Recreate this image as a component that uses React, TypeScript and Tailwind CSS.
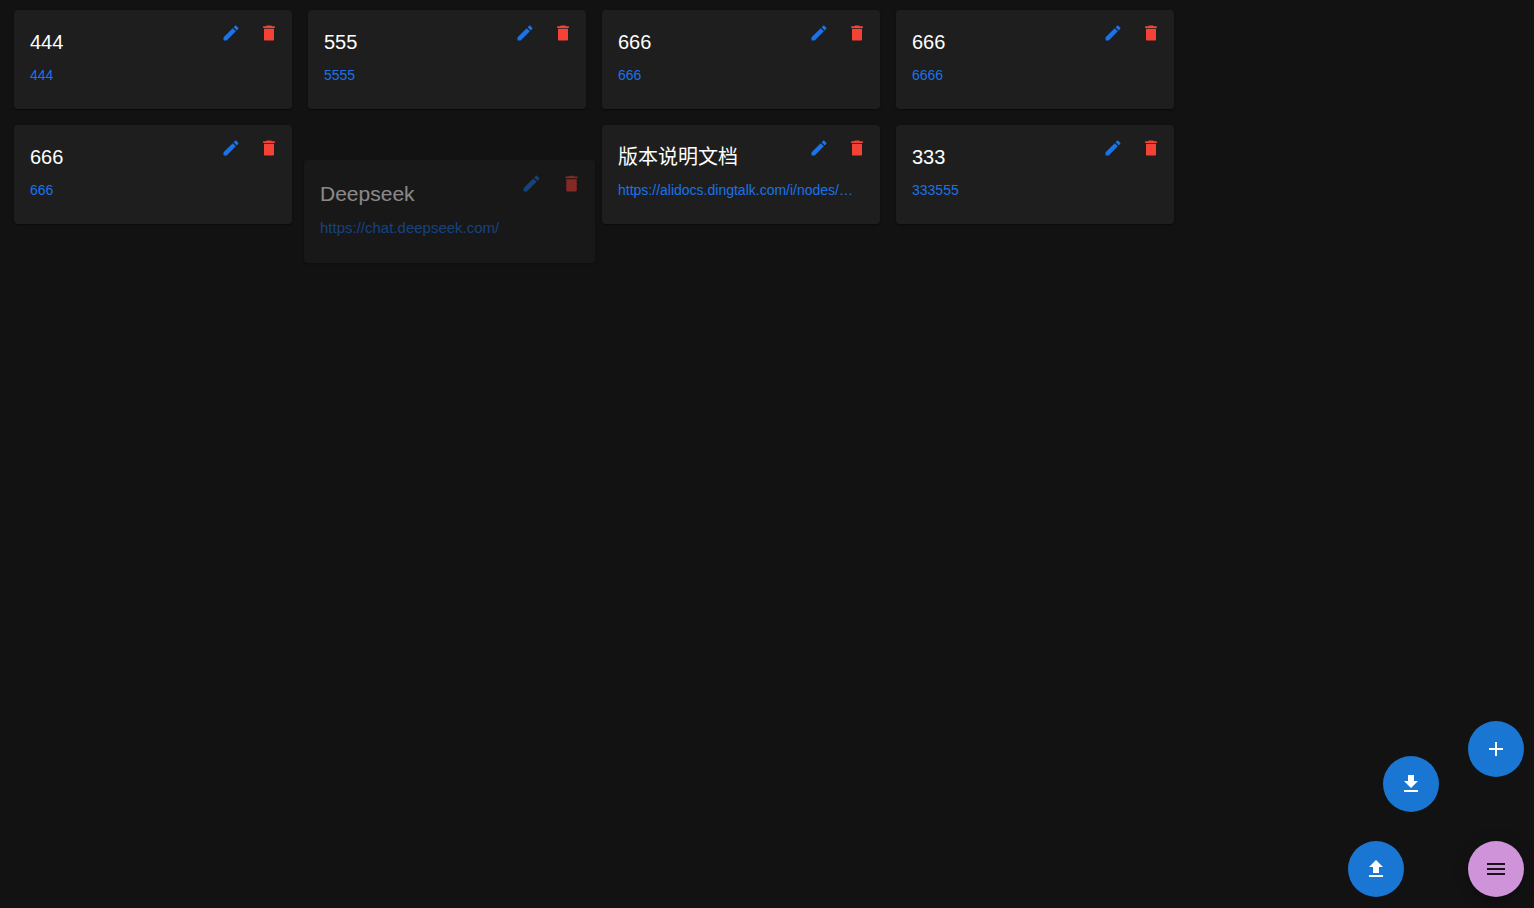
import { useState } from 'react';
import { MdAdd, MdMenu } from 'react-icons/md';
import { clsx } from 'clsx';

interface Bookmark {
  id: number;
  title: string;
  url: string;
}

const initialBookmarks: Bookmark[] = [
  { id: 1, title: '444', url: '444' },
  { id: 2, title: '555', url: '5555' },
  { id: 3, title: '666', url: '666' },
  { id: 4, title: '666', url: '6666' },
  { id: 5, title: '666', url: '666' },
  { id: 6, title: 'Deepseek', url: 'https://chat.deepseek.com/' },
  { id: 7, title: '版本说明文档', url: 'https://alidocs.dingtalk.com/i/nodes/…' },
  { id: 8, title: '333', url: '333555' },
];

function EditIcon({ className }: { className: string }) {
  return (
    <svg viewBox="0 0 24 24" fill="currentColor" className={className}>
      <path d="M3 17.46v3.04c0 .28.22.5.5.5h3.04c.13 0 .26-.05.35-.15L17.81 9.94l-3.75-3.75L3.15 17.1c-.1.1-.15.22-.15.36zM20.71 7.04c.39-.39.39-1.02 0-1.41l-2.34-2.34c-.39-.39-1.02-.39-1.41 0l-1.83 1.83 3.75 3.75 1.83-1.83z" />
    </svg>
  );
}

function DeleteIcon({ className }: { className: string }) {
  return (
    <svg viewBox="0 0 24 24" fill="currentColor" className={className}>
      <path d="M6 7h12v12.8c0 .7-.5 1.2-1.2 1.2H7.2c-.7 0-1.2-.5-1.2-1.2zM19 4h-3.5l-1-1h-5l-1 1H5v2h14z" />
    </svg>
  );
}

function DownloadIcon() {
  return (
    <svg viewBox="0 0 24 24" fill="currentColor" className="size-6">
      <path d="M19 9h-4V3H9v6H5l7 7 7-7zM5 18v2h14v-2H5z" />
    </svg>
  );
}

function UploadIcon() {
  return (
    <svg viewBox="0 0 24 24" fill="currentColor" className="size-6">
      <path d="M9 16h6v-6h4l-7-7-7 7h4zm-4 2h14v2H5z" />
    </svg>
  );
}

interface BookmarkCardProps {
  bookmark: Bookmark;
  dragging?: boolean;
  onDelete: (id: number) => void;
}

function BookmarkCard({ bookmark, dragging = false, onDelete }: BookmarkCardProps) {
  const buttonClass = clsx(
    'flex items-center justify-center rounded-full hover:bg-white/10',
    dragging ? 'size-[31px]' : 'size-[30px]'
  );
  const iconClass = dragging ? 'size-[21px]' : 'size-5';

  return (
    <article
      className={clsx(
        'rounded bg-[#1e1e1e] px-4 shadow-[0_2px_1px_-1px_rgba(0,0,0,0.2),0_1px_1px_rgba(0,0,0,0.14),0_1px_3px_rgba(0,0,0,0.12)]',
        dragging
          ? 'absolute top-[35px] -right-[9px] -left-1 z-10 pt-[17px] pb-[25px] opacity-50'
          : 'relative pt-4 pb-6'
      )}
    >
      <h2
        className={clsx(
          'truncate pr-16 font-normal text-white',
          dragging ? 'mb-[6px] text-[21px] leading-[34px]' : 'mb-[7px] text-xl leading-8'
        )}
      >
        {bookmark.title}
      </h2>
      <a
        href={bookmark.url}
        className={clsx(
          'block truncate text-[#1a73e8]',
          dragging ? 'text-[15px] leading-[21px]' : 'text-sm leading-5'
        )}
      >
        {bookmark.url}
      </a>
      <div className={clsx('absolute top-2 right-2 flex', dragging ? 'gap-[9px]' : 'gap-2')}>
        <button type="button" aria-label="Edit" className={clsx(buttonClass, 'text-[#1a73e8]')}>
          <EditIcon className={iconClass} />
        </button>
        <button
          type="button"
          aria-label="Delete"
          className={clsx(buttonClass, 'text-[#f44336]')}
          onClick={() => onDelete(bookmark.id)}
        >
          <DeleteIcon className={iconClass} />
        </button>
      </div>
    </article>
  );
}

const actionClass =
  'absolute flex size-14 items-center justify-center rounded-full bg-[#1976d2] text-white hover:bg-[#1565c0]';

function ActionMenu() {
  const [isOpen, setIsOpen] = useState(true);

  return (
    <div className="fixed right-[10px] bottom-[11px] size-14">
      {isOpen && (
        <>
          <button type="button" aria-label="Add" className={clsx(actionClass, 'right-0 bottom-[120px]')}>
            <MdAdd className="size-6" />
          </button>
          <button type="button" aria-label="Download" className={clsx(actionClass, 'right-[85px] bottom-[85px]')}>
            <DownloadIcon />
          </button>
          <button type="button" aria-label="Upload" className={clsx(actionClass, 'right-[120px] bottom-0')}>
            <UploadIcon />
          </button>
        </>
      )}
      <button
        type="button"
        aria-label="Menu"
        aria-expanded={isOpen}
        className="flex size-14 items-center justify-center rounded-full bg-[#ce93d8] text-black/87 shadow-[0_3px_5px_-1px_rgba(0,0,0,0.2),0_6px_10px_rgba(0,0,0,0.14),0_1px_18px_rgba(0,0,0,0.12)]"
        onClick={() => setIsOpen(!isOpen)}
      >
        <MdMenu className="size-6" />
      </button>
    </div>
  );
}

export default function App() {
  const [bookmarks, setBookmarks] = useState(initialBookmarks);
  const [draggingId] = useState<number | null>(6);

  const handleDelete = (id: number) => {
    setBookmarks(bookmarks.filter((bookmark) => bookmark.id !== id));
  };

  return (
    <div className="min-h-screen bg-[#121212] font-['Liberation_Sans','Noto_Sans_CJK_SC',sans-serif]">
      <main className="max-w-[1188px] px-[14px] py-[10px]">
        <ul className="grid grid-cols-2 gap-4 md:grid-cols-4">
          {bookmarks.map((bookmark) => (
            <li key={bookmark.id} className="relative min-w-0">
              <BookmarkCard
                bookmark={bookmark}
                dragging={bookmark.id === draggingId}
                onDelete={handleDelete}
              />
            </li>
          ))}
        </ul>
      </main>
      <ActionMenu />
    </div>
  );
}
